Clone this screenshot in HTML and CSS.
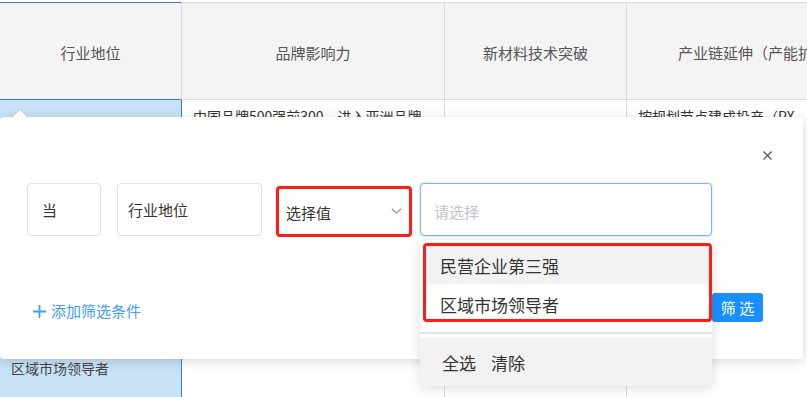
FILE: index.html
```html
<!DOCTYPE html>
<html lang="zh">
<head>
<meta charset="utf-8">
<title>筛选</title>
<link rel="stylesheet" href="styles.css">
</head>
<body>
<div class="page">
  <table class="grid">
    <colgroup><col class="c1"><col class="c2"><col class="c3"><col class="c4"></colgroup>
    <thead>
      <tr><th class="sel">行业地位</th><th>品牌影响力</th><th>新材料技术突破</th><th>产业链延伸（产能扩张）</th></tr>
    </thead>
    <tbody>
      <tr><td class="sel">区域市场领导者</td><td>中国品牌500强前300，进入亚洲品牌500强</td><td></td><td class="wide">按规划节点建成投产（PX项目）</td></tr>
    </tbody>
  </table>

  <div class="popover">
    <div class="close-row">
      <svg class="close" width="9" height="9" viewBox="0 0 9 9"><path d="M0.5 0.5 L8.5 8.5 M8.5 0.5 L0.5 8.5" stroke="#555" stroke-width="1.2" fill="none"/></svg>
    </div>
    <div class="cond-row">
      <div class="field f-op">当</div>
      <div class="field f-col">行业地位</div>
      <div class="field f-val"><span>选择值</span>
        <svg width="11" height="6" viewBox="0 0 11 6"><path d="M0.8 0.8 L5.5 5 L10.2 0.8" stroke="#999" stroke-width="1.2" fill="none"/></svg>
      </div>
      <div class="field f-input"><span class="placeholder">请选择</span>
        <div class="dropdown">
          <div class="opts">
            <div class="opt opt-hover">民营企业第三强</div>
            <div class="opt opt-last">区域市场领导者</div>
          </div>
          <div class="divider"></div>
          <div class="drop-foot"><span>全选</span><span>清除</span></div>
        </div>
      </div>
    </div>
    <div class="actions">
      <div class="add-link">
        <svg width="13" height="13" viewBox="0 0 13 13"><path d="M6.5 0 V13 M0 6.5 H13" stroke="#409eff" stroke-width="1.8" fill="none"/></svg>
        <span>添加筛选条件</span>
      </div>
      <button class="btn-filter">筛 选</button>
    </div>
  </div>
</div>
</body>
</html>
```

FILE: styles.css
```css
html, body {
  margin: 0;
  padding: 0;
  width: 807px;
  height: 397px;
  overflow: hidden;
  background: #fff;
  font-family: "Noto Sans CJK SC", "Noto Sans", sans-serif;
}

.page {
  position: relative;
  padding-top: 2px;
  height: 395px;
}

.grid {
  border-collapse: separate;
  border-spacing: 0;
  table-layout: fixed;
  width: 897px;
}
col.c1 { width: 182px; }
col.c2 { width: 263px; }
col.c3 { width: 182px; }
col.c4 { width: 270px; }

.grid thead tr { height: 98px; }
.grid th {
  box-sizing: border-box;
  background: #f4f4f4;
  border-top: 1px solid #dcdcdc;
  border-bottom: 1px solid #dcdcdc;
  border-right: 1px solid #dcdcdc;
  font-size: 15px;
  font-weight: normal;
  color: #555;
  text-align: center;
  vertical-align: middle;
  padding: 3px 0 0;
  white-space: nowrap;
  overflow: hidden;
}
.grid th.sel {
  border-top-color: #3b7ddd;
  border-bottom-color: #3b7ddd;
}
.grid th:nth-child(4) {
  text-align: left;
  padding-left: 51px;
}

.grid tbody tr { height: 536px; }
.grid td {
  box-sizing: border-box;
  border-right: 1px solid #dcdcdc;
  vertical-align: top;
  padding: 6px 16px 6px 11px;
  font-size: 14px;
  line-height: 20px;
  color: #333;
}
.grid td.wide { padding-right: 90px; }
.grid td.sel {
  background: #c7e1f6;
  border-right-color: #3b7ddd;
  vertical-align: middle;
  color: #444;
}

/* popover dialog */
.popover {
  position: absolute;
  left: 0;
  top: 117px;
  width: 803px;
  height: 242px;
  box-sizing: border-box;
  background: #fff;
  border-radius: 4px;
  box-shadow: 0 2px 12px rgba(0, 0, 0, 0.16);
  padding: 34px 31px 0 27px;
  display: flex;
  flex-direction: column;
}
.popover::before {
  content: "";
  position: absolute;
  left: 15px;
  top: -5px;
  width: 10px;
  height: 10px;
  background: #fff;
  transform: rotate(45deg);
  box-shadow: -1px -1px 2px rgba(0, 0, 0, 0.05);
}

.close-row {
  display: flex;
  justify-content: flex-end;
  height: 9px;
}
.close { display: block; }

.cond-row {
  display: flex;
  align-items: flex-start;
  margin-top: 23px;
  height: 53px;
}
.field {
  box-sizing: border-box;
  height: 53px;
  border: 1px solid #dcdfe6;
  border-radius: 4px;
  display: flex;
  align-items: center;
  font-size: 15px;
  color: #333;
  background: #fff;
}
.f-op { width: 74px; padding: 0 0 0 14px; margin-right: 16px; }
.f-col { width: 145px; padding: 0 0 0 10px; margin-right: 14px; }
.f-val {
  width: 136px;
  height: 51px;
  margin-top: 3px;
  margin-right: 8px;
  border: 3px solid #ff1c14;
  border-radius: 4px;
  padding: 2px 7px 0 7px;
  justify-content: space-between;
}
.f-val svg { display: block; margin-top: -3px; }
.f-input {
  position: relative;
  width: 292px;
  padding: 3px 0 0 13px;
  border-color: #72b6ff;
  box-shadow: 0 0 2px rgba(64, 158, 255, 0.45);
}
.placeholder { color: #c0c4cc; }

.dropdown {
  position: absolute;
  left: -1px;
  top: 56px;
  width: 292px;
  background: #fff;
  border-radius: 4px;
  box-shadow: 0 2px 12px rgba(0, 0, 0, 0.14);
  padding-top: 3px;
  z-index: 5;
}
.opts {
  margin-left: 3px;
  border: 3px solid #ff1c14;
  border-radius: 4px;
  overflow: hidden;
}
.opt {
  box-sizing: border-box;
  height: 38px;
  padding: 8px 0 6px 14px;
  line-height: 24px;
  font-size: 17px;
  color: #333;
}
.opt-hover { background: #f2f2f2; }
.opt-last { height: 35px; padding: 9px 0 2px 14px; }
.divider {
  margin-top: 10px;
  height: 2px;
  background: #e2e2e2;
}
.drop-foot {
  margin-top: 4px;
  height: 48px;
  background: #f2f2f2;
  border-radius: 0 0 4px 4px;
  display: flex;
  align-items: center;
  gap: 15px;
  padding-left: 22px;
  font-size: 17px;
  color: #333;
}

.actions {
  display: flex;
  justify-content: space-between;
  align-items: flex-start;
  margin-top: 57px;
  margin-right: 9px;
  height: 29px;
}
.add-link {
  display: flex;
  align-items: center;
  gap: 5px;
  margin: 8px 0 0 6px;
  font-size: 15px;
  line-height: 20px;
  color: #409eff;
}
.add-link svg { display: block; }
.btn-filter {
  width: 51px;
  height: 29px;
  padding: 0;
  border: none;
  border-radius: 3px;
  background: #1890ff;
  color: #fff;
  font-family: inherit;
  font-size: 15px;
  line-height: 29px;
}
```
